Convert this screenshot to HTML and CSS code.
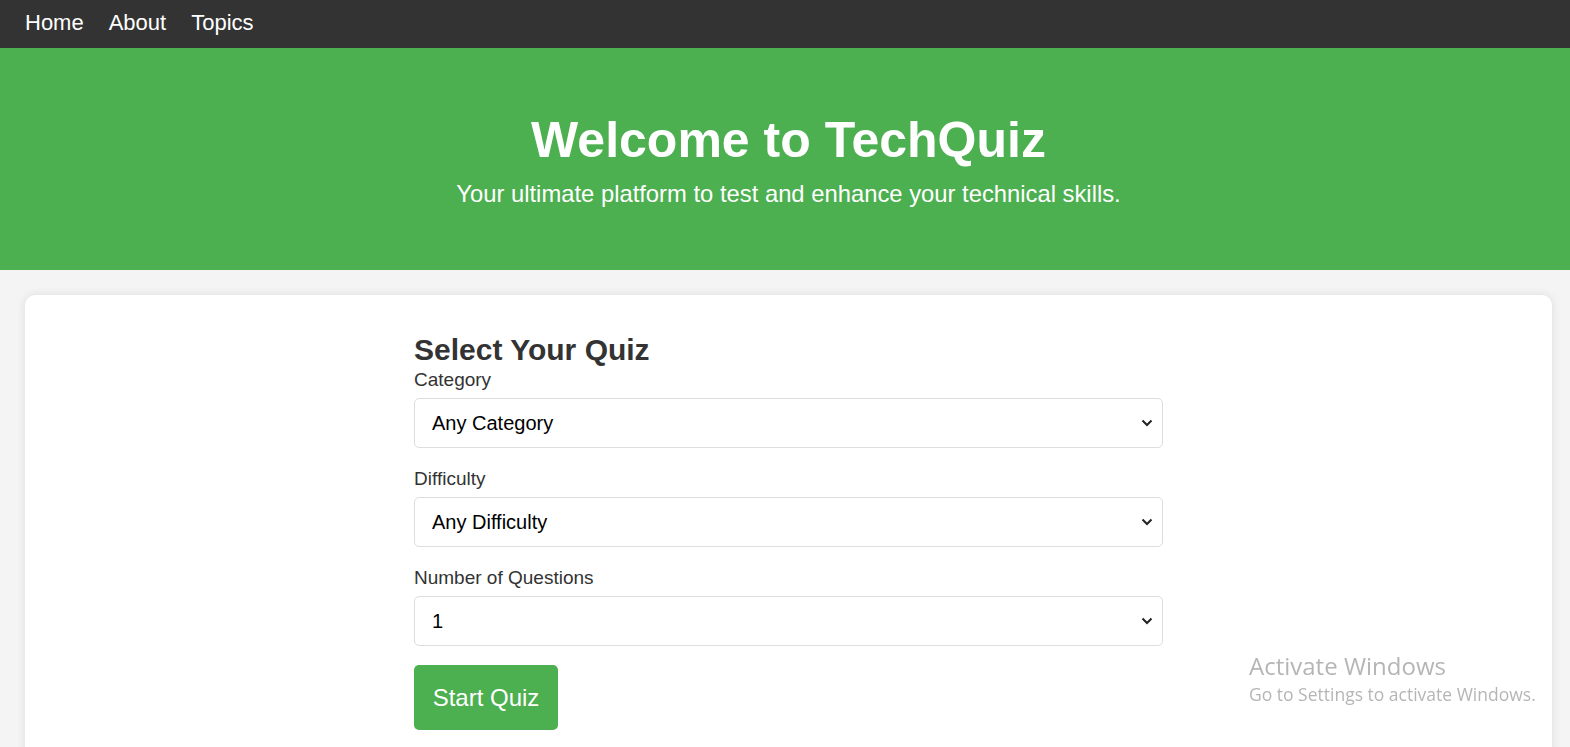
FILE: index.html
```html
<!DOCTYPE html>
<html lang="en">
<head>
<meta charset="utf-8">
<title>TechQuiz</title>
<link rel="stylesheet" href="styles.css">
</head>
<body>
<nav class="nav">
  <a href="#" class="nav-link">Home</a>
  <a href="#" class="nav-link">About</a>
  <a href="#" class="nav-link">Topics</a>
</nav>
<header class="hero">
  <h1 class="hero-title">Welcome to TechQuiz</h1>
  <p class="hero-sub">Your ultimate platform to test and enhance your technical skills.</p>
</header>
<main class="main">
  <section class="card">
    <form class="quiz-form">
      <h2 class="form-title">Select Your Quiz</h2>
      <label class="field-label" for="cat">Category</label>
      <div class="select-wrap">
        <select id="cat" class="field-select"><option>Any Category</option></select>
        <svg class="chev" width="12" height="8" viewBox="0 0 12 8"><path d="M1.5 1.5 L6 6 L10.5 1.5" fill="none" stroke="#222" stroke-width="2"/></svg>
      </div>
      <label class="field-label" for="diff">Difficulty</label>
      <div class="select-wrap">
        <select id="diff" class="field-select"><option>Any Difficulty</option></select>
        <svg class="chev" width="12" height="8" viewBox="0 0 12 8"><path d="M1.5 1.5 L6 6 L10.5 1.5" fill="none" stroke="#222" stroke-width="2"/></svg>
      </div>
      <label class="field-label" for="num">Number of Questions</label>
      <div class="select-wrap">
        <select id="num" class="field-select"><option>1</option></select>
        <svg class="chev" width="12" height="8" viewBox="0 0 12 8"><path d="M1.5 1.5 L6 6 L10.5 1.5" fill="none" stroke="#222" stroke-width="2"/></svg>
      </div>
      <button type="button" class="start-btn">Start Quiz</button>
    </form>
  </section>
</main>
<div class="watermark">
  <div class="wm-title">Activate Windows</div>
  <div class="wm-sub">Go to Settings to activate Windows.</div>
</div>
</body>
</html>
```
FILE: styles.css
```css
* { box-sizing: border-box; }
html, body { margin: 0; padding: 0; }
body {
  font-family: "Liberation Sans", Arial, sans-serif;
  background: #f4f4f4;
  color: #333;
  overflow: hidden;
  height: 747px;
}
.nav {
  background: #333;
  height: 48px;
  display: flex;
  align-items: center;
  gap: 25px;
  padding-left: 25px;
  padding-bottom: 3px;
}
.nav-link {
  color: #fff;
  text-decoration: none;
  font-size: 22px;
}
.hero {
  background: #4caf50;
  color: #fff;
  height: 222px;
  display: flex;
  flex-direction: column;
  align-items: center;
  padding-top: 62px;
  padding-left: 7px;
}
.hero-title {
  margin: 0;
  font-size: 50px;
  font-weight: bold;
  line-height: 60px;
}
.hero-sub {
  margin: 9px 0 0;
  font-size: 23.8px;
  line-height: 30px;
}
.main {
  padding: 25px 18px 0 25px;
}
.card {
  background: #fff;
  border-radius: 10px;
  box-shadow: 0 0 10px rgba(0,0,0,0.1);
  padding: 37px 0 40px;
  height: 480px;
}
.quiz-form {
  width: 749px;
  margin: 0 auto;
  display: flex;
  flex-direction: column;
}
.form-title {
  margin: 0;
  font-size: 30px;
  line-height: 36px;
  color: #333;
}
.field-label {
  font-size: 19px;
  line-height: 24px;
  color: #333;
  margin-bottom: 6px;
}
.select-wrap {
  position: relative;
  margin-bottom: 19px;
}
.field-select {
  -webkit-appearance: none;
  appearance: none;
  width: 100%;
  height: 50px;
  border: 1px solid #ddd;
  border-radius: 5px;
  background: #fff;
  font-family: "Liberation Sans", Arial, sans-serif;
  font-size: 20px;
  color: #000;
  padding: 0 17px;
}
.chev {
  position: absolute;
  right: 10px;
  top: 21px;
  pointer-events: none;
}
.start-btn {
  align-self: flex-start;
  width: 144px;
  height: 65px;
  background: #4caf50;
  color: #fff;
  border: none;
  border-radius: 5px;
  font-family: "Liberation Sans", Arial, sans-serif;
  font-size: 24px;
  padding: 0;
}
.watermark {
  position: fixed;
  left: 1249px;
  top: 651px;
  color: rgba(120,120,120,0.55);
  font-family: "Open Sans", "Noto Sans", sans-serif;
}
.wm-title { font-size: 24px; line-height: 30px; }
.wm-sub { font-size: 17.5px; line-height: 26px; }
```
